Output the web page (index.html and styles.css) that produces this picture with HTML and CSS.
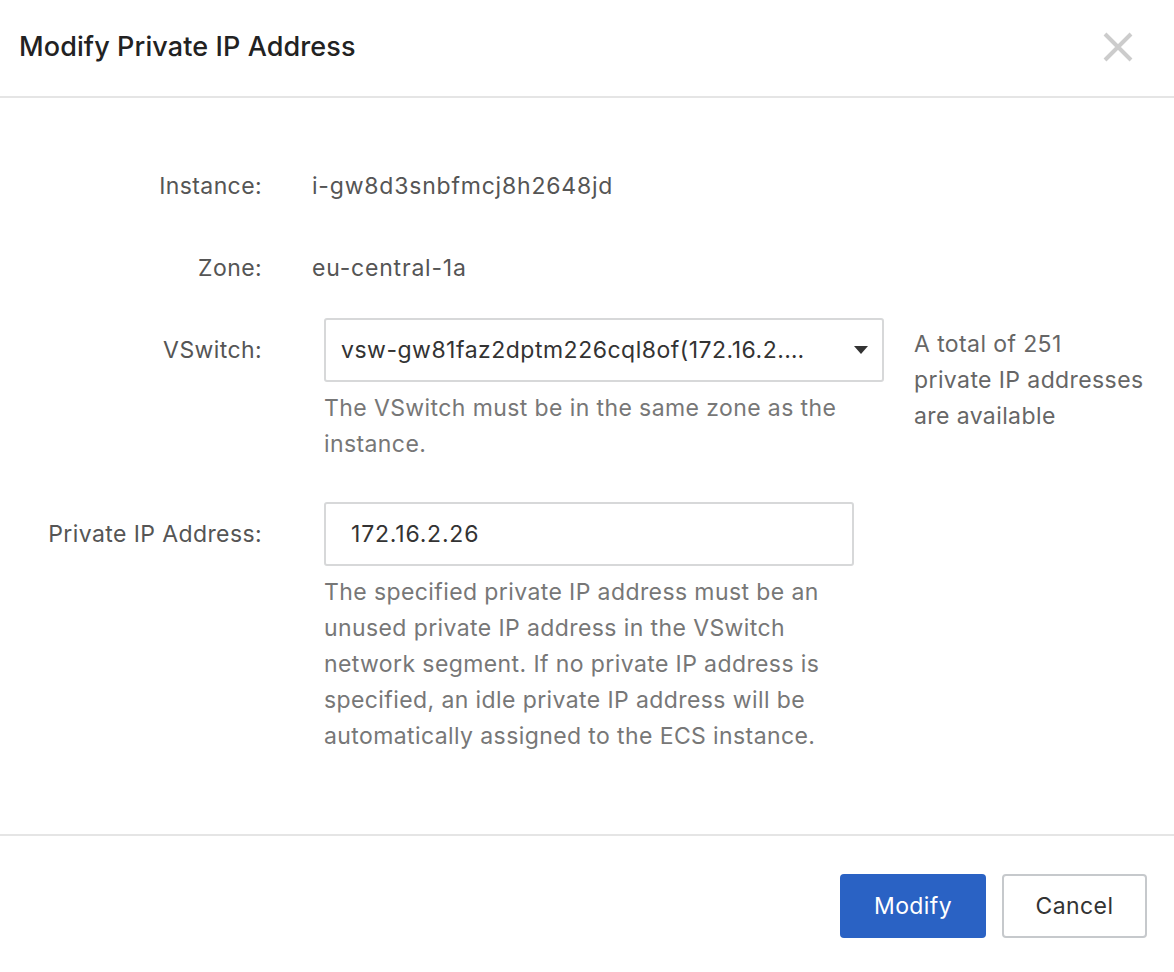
FILE: index.html
```html
<!DOCTYPE html>
<html lang="en">
<head>
<meta charset="utf-8">
<title>Modify Private IP Address</title>
<link rel="stylesheet" href="styles.css">
</head>
<body>
<div class="dialog">
  <header class="dlg-header">
    <h1 class="dlg-title">Modify Private IP Address</h1>
    <button class="dlg-close" aria-label="Close">
      <svg width="32" height="32" viewBox="0 0 32 32"><path d="M3 3 L29 29 M29 3 L3 29" stroke="#cccccc" stroke-width="4" fill="none"/></svg>
    </button>
  </header>
  <main class="dlg-body">
    <div class="form">
      <div class="row row-instance">
        <div class="label">Instance:</div>
        <div class="value">i-gw8d3snbfmcj8h2648jd</div>
      </div>
      <div class="row row-zone">
        <div class="label">Zone:</div>
        <div class="value">eu-central-1a</div>
      </div>
      <div class="row row-vswitch">
        <div class="label label-ctl">VSwitch:</div>
        <div class="control control-split">
          <div class="ctl-main">
            <div class="select">
              <span class="select-text">vsw-gw81faz2dptm226cql8of(172.16.2.…</span>
              <svg class="caret" width="14" height="8" viewBox="0 0 14 8"><path d="M0 0 H14 L7 8 Z" fill="#333"/></svg>
            </div>
            <p class="help help-narrow">The VSwitch must be in the same zone as the instance.</p>
          </div>
          <div class="side-note">A total of 251<br>private IP addresses are available</div>
        </div>
      </div>
      <div class="row">
        <div class="label label-ctl">Private IP Address:</div>
        <div class="control">
          <div class="input">172.16.2.26</div>
          <p class="help help-wide">The specified private IP address must be an unused private IP address in the VSwitch network segment. If no private IP address is specified, an idle private IP address will be automatically assigned to the ECS instance.</p>
        </div>
      </div>
    </div>
  </main>
  <footer class="dlg-footer">
    <button class="btn btn-primary">Modify</button>
    <button class="btn btn-default">Cancel</button>
  </footer>
</div>
</body>
</html>
```

FILE: styles.css
```css
* { box-sizing: border-box; }
html, body { margin: 0; padding: 0; background: #fff; }
body {
  font-family: Inter, "Noto Sans", "Liberation Sans", sans-serif;
  font-size: 23px;
  letter-spacing: 0.4px;
  color: #333;
}
.dialog {
  width: 1174px;
  height: 972px;
  display: flex;
  flex-direction: column;
}
.dlg-header {
  height: 98px;
  flex: none;
  border-bottom: 2px solid #e5e5e5;
  display: flex;
  align-items: center;
  justify-content: space-between;
  padding: 0 40px 4px 19px;
}
.dlg-title {
  margin: 0;
  font-size: 27px;
  font-weight: 500;
  letter-spacing: 0.1px;
  color: #222;
}
.dlg-close {
  border: 0;
  background: none;
  padding: 0;
  display: flex;
  margin-top: 2px;
}
.dlg-body {
  height: 736px;
  flex: none;
  padding-top: 70px;
}
.form {
  display: flex;
  flex-direction: column;
}
.row {
  display: grid;
  grid-template-columns: 262px 1fr;
  column-gap: 62px;
}
.row-instance { margin-bottom: 46px; }
.row-zone { margin-bottom: 32px; }
.row-vswitch { margin-bottom: 40px; }
.label {
  text-align: right;
  color: #555;
  line-height: 36px;
  white-space: nowrap;
}
.value {
  color: #555;
  margin-left: -12px;
  line-height: 36px;
  letter-spacing: 0.8px;
}
.label-ctl { line-height: 64px; }
.control-split {
  display: flex;
  align-items: flex-start;
  gap: 30px;
}
.ctl-main {
  width: 560px;
  flex: none;
}
.select {
  width: 560px;
  height: 64px;
  border: 2px solid #d7d8d9;
  border-radius: 3px;
  display: flex;
  align-items: center;
  justify-content: space-between;
  padding: 0 14px 0 15px;
  color: #333;
}
.select-text { white-space: nowrap; letter-spacing: 0.5px; }
.side-note {
  width: 245px;
  color: #666;
  line-height: 36px;
  margin-top: 8px;
}
.help {
  margin: 8px 0 0;
  color: #777;
  line-height: 36px;
}
.help-narrow { width: 540px; }
.help-wide { width: 515px; }
.input {
  width: 530px;
  height: 64px;
  border: 2px solid #d7d8d9;
  border-radius: 3px;
  display: flex;
  align-items: center;
  padding: 0 25px;
  color: #333;
  letter-spacing: 0.8px;
}
.dlg-footer {
  flex: 1;
  border-top: 2px solid #e5e5e5;
  display: flex;
  justify-content: flex-end;
  align-items: flex-start;
  gap: 16px;
  padding: 38px 27px 0 0;
}
.btn {
  height: 64px;
  border-radius: 4px;
  font-family: inherit;
  font-size: 23px;
  letter-spacing: 0.4px;
  padding: 0;
}
.btn-primary {
  width: 146px;
  background: #2a62c4;
  border: 0;
  color: #fff;
}
.btn-default {
  width: 145px;
  background: #fff;
  border: 2px solid #c6c9cc;
  color: #333;
}
```
